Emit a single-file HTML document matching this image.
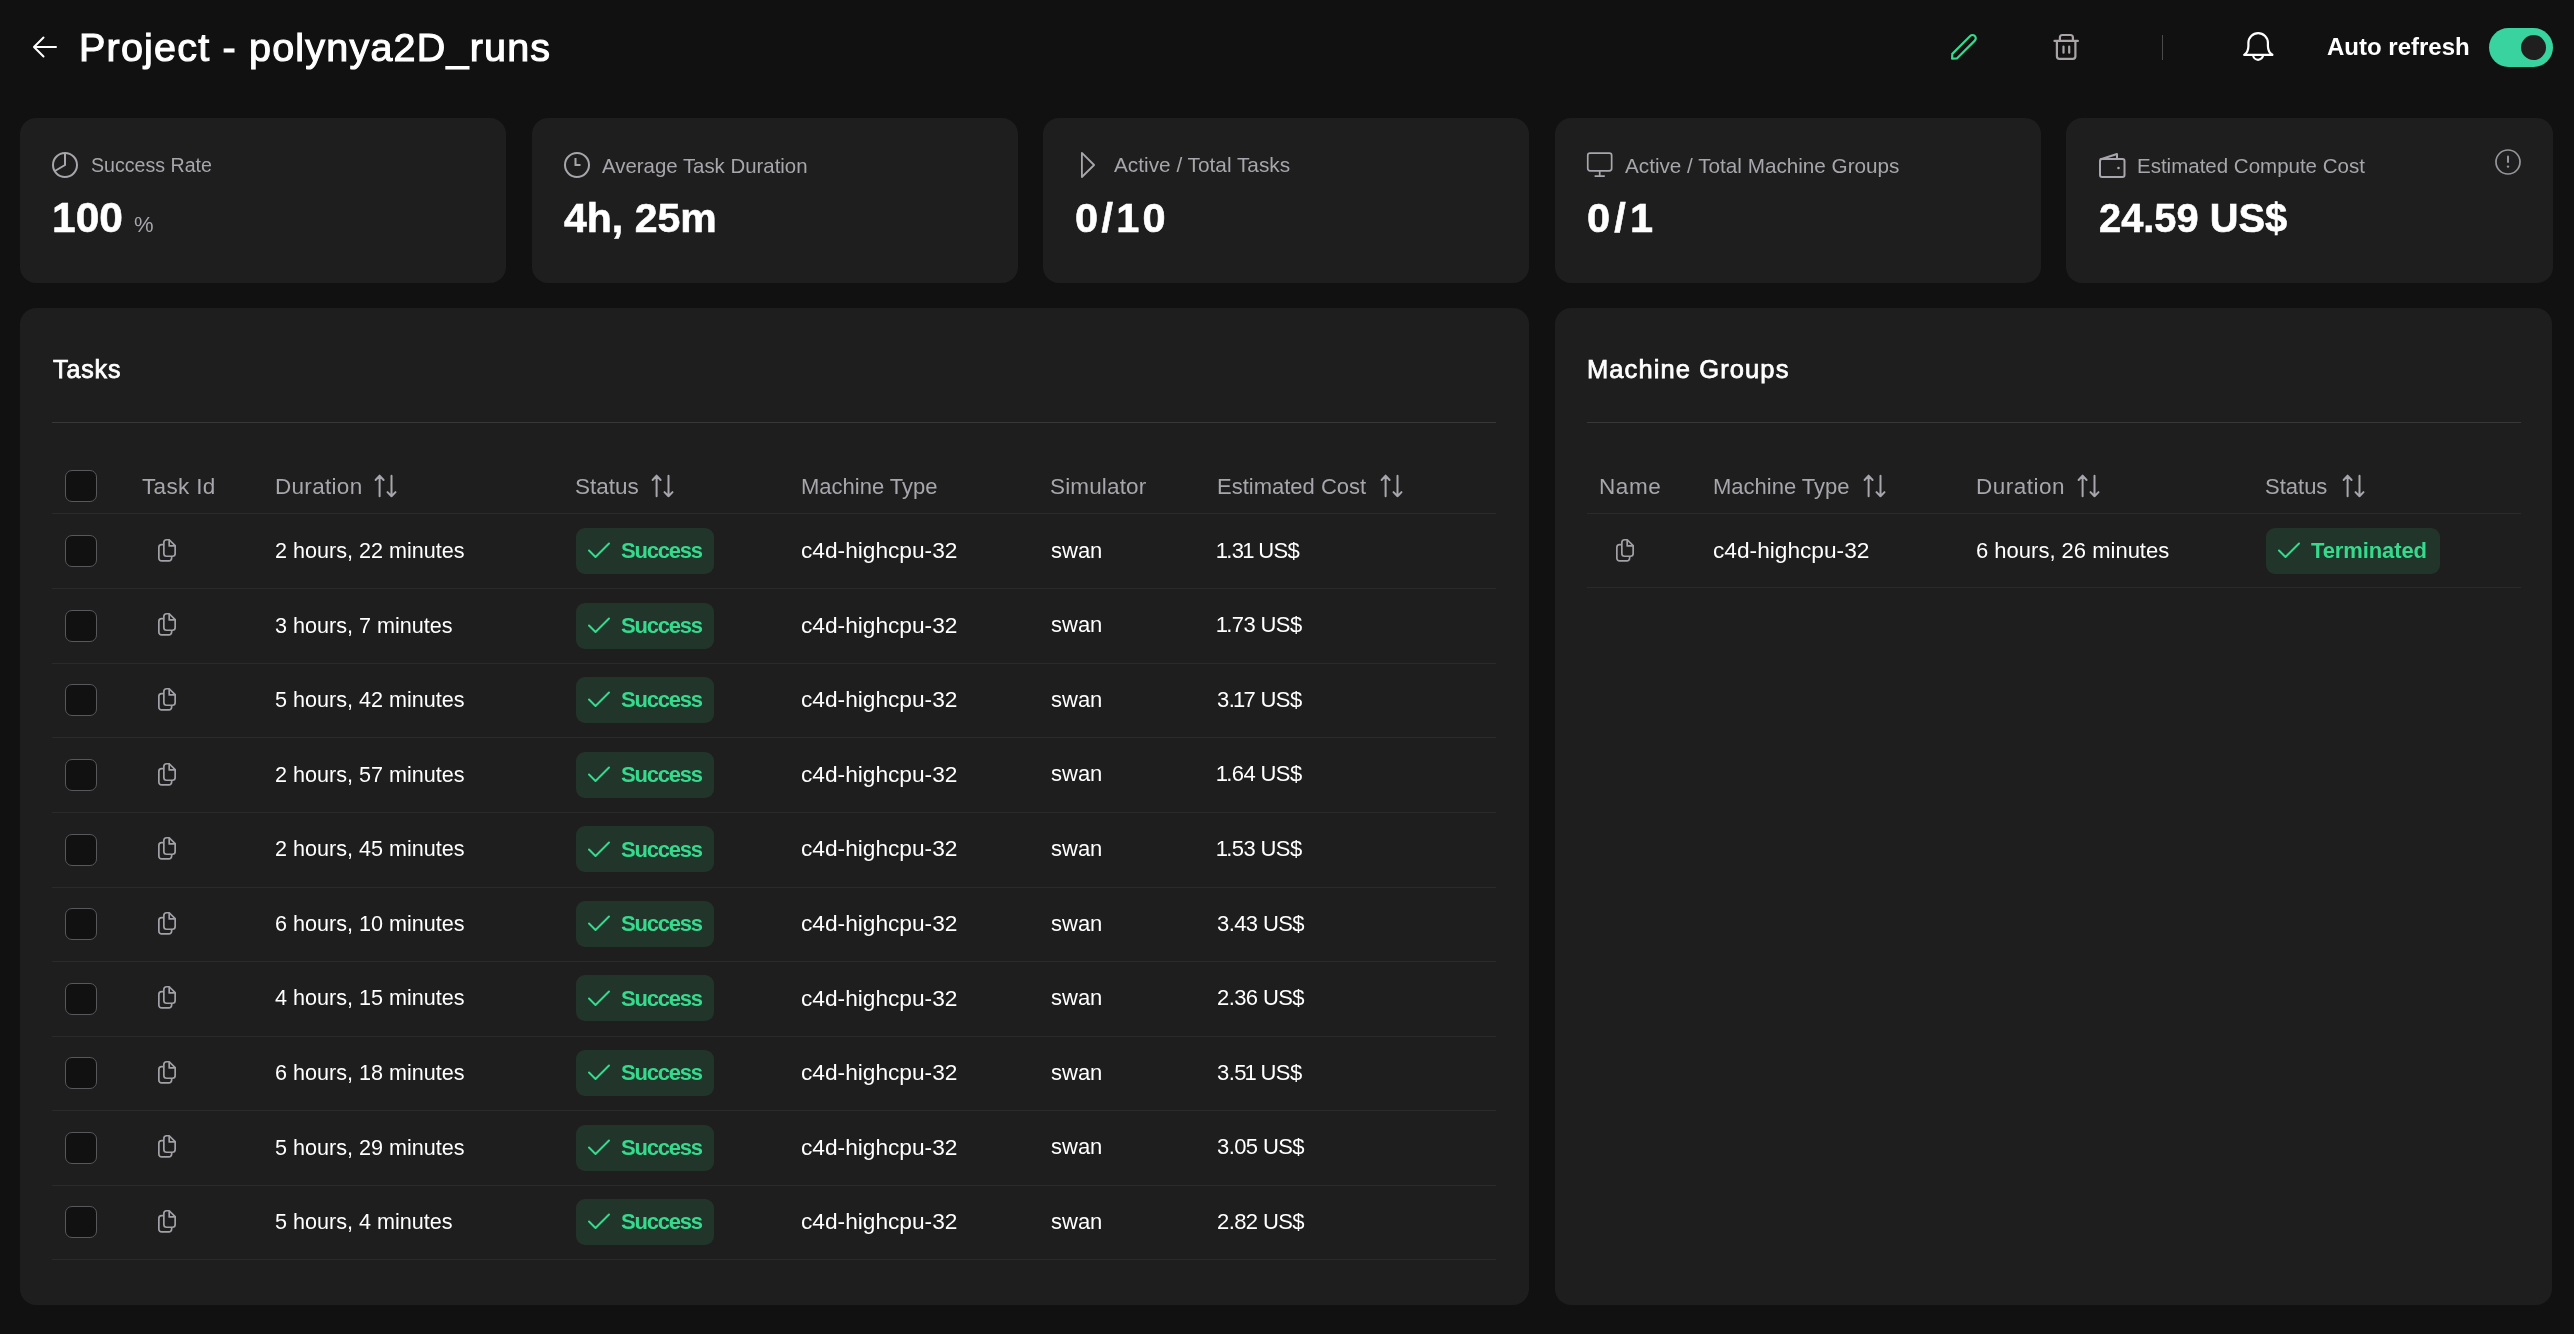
<!DOCTYPE html>
<html><head><meta charset="utf-8"><title>Project - polynya2D_runs</title>
<style>
html,body{margin:0;padding:0;}
body{width:2574px;height:1334px;background:#111111;position:relative;overflow:hidden;font-family:"Liberation Sans", sans-serif;}
.t{position:absolute;white-space:pre;line-height:1;will-change:transform;}
.r{position:absolute;display:block;}
</style></head><body>
<svg class="r" style="left:30px;top:34px" width="30" height="26" viewBox="0 0 30 26" fill="none"><path d="M26 13H4.5M13.5 3.5L4 13l9.5 9.5" stroke="#fff" stroke-width="2" stroke-linecap="round" stroke-linejoin="round"/></svg>
<div class="t" style="left:79.0px;top:27.8px;font-size:39.5px;font-weight:400;color:#fff;-webkit-text-stroke:1.1px #fff;letter-spacing:1.2px;">Project - polynya2D_runs</div>
<svg class="r" style="left:1945px;top:31px" width="34" height="34" viewBox="0 0 34 34" fill="none"><path d="M29.8 9.6 L11.9 27.5 L7.1 27.7 L7.3 22.9 L25.2 5.0 A3.25 3.25 0 0 1 29.8 9.6 Z" stroke="#35da8d" stroke-width="2.2" stroke-linejoin="round"/></svg>
<svg class="r" style="left:2050px;top:31px" width="32" height="32" viewBox="0 0 32 32" fill="none"><path d="M4.5 9.9H27.9M9.9 9.9V6.5a2.5 2.5 0 0 1 2.5-2.5h8a2.5 2.5 0 0 1 2.5 2.5v3.4M6.9 9.9v15.4a2.5 2.5 0 0 0 2.5 2.5h13.5a2.5 2.5 0 0 0 2.5-2.5V9.9M13.5 15.6v6.1M19.2 15.6v6.1" stroke="#aaa3a7" stroke-width="2.2" stroke-linecap="round" stroke-linejoin="round"/></svg>
<div class="r" style="left:2162px;top:35px;width:1px;height:25px;background:#4a4a4a;border-radius:0px;"></div>
<svg class="r" style="left:2240px;top:30px" width="36" height="34" viewBox="0 0 36 34" fill="none"><path d="M4.2 24.8H32.4M4.2 24.8C7.5 22.5 8.4 20.5 8.4 16V12.8A9.75 9.75 0 0 1 27.9 12.8V16C27.9 20.5 28.8 22.5 32.4 24.8M13.1 24.8A5 5 0 0 0 23.1 24.8" stroke="#fff" stroke-width="2.2" stroke-linecap="round" stroke-linejoin="round"/></svg>
<div class="t" style="left:2327.0px;top:34.7px;font-size:24px;font-weight:700;color:#fff;">Auto refresh</div>
<div class="r" style="left:2489px;top:28px;width:64px;height:39px;background:#38d39e;border-radius:20px;"></div>
<div class="r" style="left:2521px;top:35px;width:25px;height:25px;background:#1f1f1f;border-radius:13px;"></div>
<div class="r" style="left:20px;top:118px;width:486.2px;height:164.5px;background:#1e1e1e;border-radius:16px;"></div>
<div class="t" style="left:90.5px;top:156.4px;font-size:19.6px;font-weight:400;color:#a8a6ac;">Success Rate</div>
<div class="r" style="left:531.6px;top:118px;width:486.2px;height:164.5px;background:#1e1e1e;border-radius:16px;"></div>
<div class="t" style="left:602.1px;top:155.7px;font-size:20.4px;font-weight:400;color:#a8a6ac;">Average Task Duration</div>
<div class="r" style="left:1043.2px;top:118px;width:486.2px;height:164.5px;background:#1e1e1e;border-radius:16px;"></div>
<div class="t" style="left:1113.7px;top:155.4px;font-size:20.8px;font-weight:400;color:#a8a6ac;">Active / Total Tasks</div>
<div class="r" style="left:1554.8px;top:118px;width:486.2px;height:164.5px;background:#1e1e1e;border-radius:16px;"></div>
<div class="t" style="left:1625.3px;top:155.5px;font-size:20.7px;font-weight:400;color:#a8a6ac;">Active / Total Machine Groups</div>
<div class="r" style="left:2066.4px;top:118px;width:486.2px;height:164.5px;background:#1e1e1e;border-radius:16px;"></div>
<div class="t" style="left:2136.9px;top:155.6px;font-size:20.5px;font-weight:400;color:#a8a6ac;">Estimated Compute Cost</div>
<svg class="r" style="left:50px;top:150px" width="30" height="30" viewBox="0 0 30 30" fill="none"><circle cx="15" cy="15" r="12" stroke="#a8a6ac" stroke-width="2"/><path d="M15 3v12L4.8 21" stroke="#a8a6ac" stroke-width="2"/></svg>
<svg class="r" style="left:562px;top:150px" width="30" height="30" viewBox="0 0 30 30" fill="none"><circle cx="15" cy="15" r="12" stroke="#a8a6ac" stroke-width="2"/><path d="M13.5 8v7h5" stroke="#a8a6ac" stroke-width="2"/></svg>
<svg class="r" style="left:1078px;top:150px" width="22" height="30" viewBox="0 0 22 30" fill="none"><path d="M3.9 2.9v24.1l12.2-12z" stroke="#a8a6ac" stroke-width="1.8" stroke-linejoin="round"/></svg>
<svg class="r" style="left:1584px;top:150px" width="32" height="30" viewBox="0 0 32 30" fill="none"><rect x="3.75" y="3.05" width="23.9" height="17.8" rx="2.3" stroke="#a8a6ac" stroke-width="1.7"/><path d="M15.7 20.9v5.3M10.6 26.2h10.2" stroke="#a8a6ac" stroke-width="1.7"/></svg>
<svg class="r" style="left:2096px;top:148px" width="32" height="32" viewBox="0 0 32 32" fill="none"><path d="M4 11.5 L21 6 V11" stroke="#a8a6ac" stroke-width="2" stroke-linejoin="round"/><rect x="4" y="11" width="24.5" height="18" rx="2" stroke="#a8a6ac" stroke-width="2"/><circle cx="22.5" cy="20" r="1.3" fill="#a8a6ac"/></svg>
<svg class="r" style="left:2492px;top:146px" width="32" height="32" viewBox="0 0 32 32" fill="none"><circle cx="16" cy="16" r="12" stroke="#97959b" stroke-width="1.7"/><path d="M16 10.5v5.5" stroke="#97959b" stroke-width="2" stroke-linecap="round"/><circle cx="16" cy="20.6" r="1.2" fill="#97959b"/></svg>
<div class="t" style="left:52.0px;top:196.5px;font-size:42.5px;font-weight:700;color:#fff;-webkit-text-stroke:0.6px #fff;">100</div>
<div class="t" style="left:564.0px;top:197.8px;font-size:41px;font-weight:700;color:#fff;-webkit-text-stroke:0.6px #fff;">4h, 25m</div>
<div class="t" style="left:1075.0px;top:197.4px;font-size:41.5px;font-weight:700;color:#fff;letter-spacing:3.3px;-webkit-text-stroke:0.6px #fff;">0/10</div>
<div class="t" style="left:1587.0px;top:197.4px;font-size:41.5px;font-weight:700;color:#fff;letter-spacing:4.2px;-webkit-text-stroke:0.6px #fff;">0/1</div>
<div class="t" style="left:2099.0px;top:198.8px;font-size:39.8px;font-weight:700;color:#fff;-webkit-text-stroke:0.6px #fff;">24.59 US$</div>
<div class="t" style="left:134.0px;top:213.9px;font-size:22px;font-weight:400;color:#a8a6ac;">%</div>
<div class="r" style="left:20px;top:307.5px;width:1508.6px;height:997px;background:#1e1e1e;border-radius:16px;"></div>
<div class="r" style="left:1555.2px;top:307.5px;width:997.2px;height:997px;background:#1e1e1e;border-radius:16px;"></div>
<div class="t" style="left:52.5px;top:357.0px;font-size:25px;font-weight:400;color:#fff;-webkit-text-stroke:0.75px #fff;letter-spacing:0.9px;">Tasks</div>
<div class="t" style="left:1587.0px;top:356.9px;font-size:25.5px;font-weight:400;color:#fff;-webkit-text-stroke:0.75px #fff;letter-spacing:1.1px;">Machine Groups</div>
<div class="r" style="left:52px;top:422px;width:1444px;height:1px;background:#383838;border-radius:0px;"></div>
<div class="r" style="left:1587px;top:422px;width:934px;height:1px;background:#383838;border-radius:0px;"></div>
<div class="r" style="left:65px;top:470px;width:32px;height:32px;background:#111111;border-radius:7px;box-sizing:border-box;border:1.2px solid #58575c;"></div>
<div class="t" style="left:142.0px;top:475.6px;font-size:22.5px;font-weight:400;color:#a8a6ac;letter-spacing:0.35px;">Task Id</div>
<div class="t" style="left:275.0px;top:475.6px;font-size:22.5px;font-weight:400;color:#a8a6ac;letter-spacing:0.3px;">Duration</div>
<svg class="r" style="left:373.1px;top:474px" width="26" height="26" viewBox="0 0 26 26" fill="none"><path d="M6.6 22.3V1.8M2.6 6L6.6 1.8L10.6 6M18.5 1.8V22.3M14.5 18.1L18.5 22.3L22.5 18.1" stroke="#a8a6ac" stroke-width="2" stroke-linecap="round" stroke-linejoin="round"/></svg>
<div class="t" style="left:575.0px;top:475.6px;font-size:22.5px;font-weight:400;color:#a8a6ac;">Status</div>
<svg class="r" style="left:650.2px;top:474px" width="26" height="26" viewBox="0 0 26 26" fill="none"><path d="M6.6 22.3V1.8M2.6 6L6.6 1.8L10.6 6M18.5 1.8V22.3M14.5 18.1L18.5 22.3L22.5 18.1" stroke="#a8a6ac" stroke-width="2" stroke-linecap="round" stroke-linejoin="round"/></svg>
<div class="t" style="left:801.0px;top:476.1px;font-size:22px;font-weight:400;color:#a8a6ac;">Machine Type</div>
<div class="t" style="left:1050.0px;top:475.6px;font-size:22.5px;font-weight:400;color:#a8a6ac;letter-spacing:0.15px;">Simulator</div>
<div class="t" style="left:1217.0px;top:476.1px;font-size:22px;font-weight:400;color:#a8a6ac;">Estimated Cost</div>
<svg class="r" style="left:1379.4px;top:474px" width="26" height="26" viewBox="0 0 26 26" fill="none"><path d="M6.6 22.3V1.8M2.6 6L6.6 1.8L10.6 6M18.5 1.8V22.3M14.5 18.1L18.5 22.3L22.5 18.1" stroke="#a8a6ac" stroke-width="2" stroke-linecap="round" stroke-linejoin="round"/></svg>
<div class="r" style="left:52px;top:513px;width:1444px;height:1px;background:#2a2a2a;border-radius:0px;"></div>
<div class="r" style="left:65px;top:535px;width:32px;height:32px;background:#111111;border-radius:7px;box-sizing:border-box;border:1.2px solid #58575c;"></div>
<svg class="r" style="left:156px;top:538px" width="22" height="26" viewBox="0 0 22 26" fill="none"><path d="M7.85 6.65H5.6a2.75 2.75 0 0 0-2.75 2.75V20.1a2.75 2.75 0 0 0 2.75 2.75H12.9a2.75 2.75 0 0 0 2.75-2.75V18.25" stroke="#a3a1a7" stroke-width="1.7" stroke-linejoin="round"/><path d="M7.85 4.5a2.75 2.75 0 0 1 2.75-2.75H13.2L19.15 7.7V15.5a2.75 2.75 0 0 1-2.75 2.75H10.6a2.75 2.75 0 0 1-2.75-2.75Z" stroke="#a3a1a7" stroke-width="1.7" stroke-linejoin="round"/><path d="M13.2 1.75V7.9H19.15" stroke="#a3a1a7" stroke-width="1.7" stroke-linejoin="round"/></svg>
<div class="t" style="left:275.0px;top:540.0px;font-size:21.6px;font-weight:400;color:#fff;">2 hours, 22 minutes</div>
<div class="r" style="left:576px;top:528px;width:138px;height:46px;background:#22352b;border-radius:9px;"></div>
<svg class="r" style="left:587px;top:541px" width="24" height="18" viewBox="0 0 24 18" fill="none"><path d="M2 9.5l6.5 6.5L22 2.5" stroke="#35da8d" stroke-width="2" stroke-linecap="round" stroke-linejoin="round"/></svg>
<div class="t" style="left:621.0px;top:540.2px;font-size:22px;font-weight:700;color:#35da8d;letter-spacing:-1.2px;">Success</div>
<div class="t" style="left:801.0px;top:539.1px;font-size:22.7px;font-weight:400;color:#fff;">c4d-highcpu-32</div>
<div class="t" style="left:1051.0px;top:539.7px;font-size:22px;font-weight:400;color:#fff;">swan</div>
<div class="t" style="left:1216.5px;top:539.7px;font-size:22px;font-weight:400;color:#fff;letter-spacing:-0.6px;"><span style="margin:0 -1.2px">1</span>.3<span style="margin:0 -1.2px">1</span> US$</div>
<div class="r" style="left:52px;top:588px;width:1444px;height:1px;background:#2a2a2a;border-radius:0px;"></div>
<div class="r" style="left:65px;top:610px;width:32px;height:32px;background:#111111;border-radius:7px;box-sizing:border-box;border:1.2px solid #58575c;"></div>
<svg class="r" style="left:156px;top:612px" width="22" height="26" viewBox="0 0 22 26" fill="none"><path d="M7.85 6.65H5.6a2.75 2.75 0 0 0-2.75 2.75V20.1a2.75 2.75 0 0 0 2.75 2.75H12.9a2.75 2.75 0 0 0 2.75-2.75V18.25" stroke="#a3a1a7" stroke-width="1.7" stroke-linejoin="round"/><path d="M7.85 4.5a2.75 2.75 0 0 1 2.75-2.75H13.2L19.15 7.7V15.5a2.75 2.75 0 0 1-2.75 2.75H10.6a2.75 2.75 0 0 1-2.75-2.75Z" stroke="#a3a1a7" stroke-width="1.7" stroke-linejoin="round"/><path d="M13.2 1.75V7.9H19.15" stroke="#a3a1a7" stroke-width="1.7" stroke-linejoin="round"/></svg>
<div class="t" style="left:275.0px;top:614.6px;font-size:21.6px;font-weight:400;color:#fff;">3 hours, 7 minutes</div>
<div class="r" style="left:576px;top:603px;width:138px;height:46px;background:#22352b;border-radius:9px;"></div>
<svg class="r" style="left:587px;top:616px" width="24" height="18" viewBox="0 0 24 18" fill="none"><path d="M2 9.5l6.5 6.5L22 2.5" stroke="#35da8d" stroke-width="2" stroke-linecap="round" stroke-linejoin="round"/></svg>
<div class="t" style="left:621.0px;top:614.7px;font-size:22px;font-weight:700;color:#35da8d;letter-spacing:-1.2px;">Success</div>
<div class="t" style="left:801.0px;top:613.6px;font-size:22.7px;font-weight:400;color:#fff;">c4d-highcpu-32</div>
<div class="t" style="left:1051.0px;top:614.2px;font-size:22px;font-weight:400;color:#fff;">swan</div>
<div class="t" style="left:1216.5px;top:614.2px;font-size:22px;font-weight:400;color:#fff;letter-spacing:-0.6px;"><span style="margin:0 -1.2px">1</span>.73 US$</div>
<div class="r" style="left:52px;top:663px;width:1444px;height:1px;background:#2a2a2a;border-radius:0px;"></div>
<div class="r" style="left:65px;top:684px;width:32px;height:32px;background:#111111;border-radius:7px;box-sizing:border-box;border:1.2px solid #58575c;"></div>
<svg class="r" style="left:156px;top:687px" width="22" height="26" viewBox="0 0 22 26" fill="none"><path d="M7.85 6.65H5.6a2.75 2.75 0 0 0-2.75 2.75V20.1a2.75 2.75 0 0 0 2.75 2.75H12.9a2.75 2.75 0 0 0 2.75-2.75V18.25" stroke="#a3a1a7" stroke-width="1.7" stroke-linejoin="round"/><path d="M7.85 4.5a2.75 2.75 0 0 1 2.75-2.75H13.2L19.15 7.7V15.5a2.75 2.75 0 0 1-2.75 2.75H10.6a2.75 2.75 0 0 1-2.75-2.75Z" stroke="#a3a1a7" stroke-width="1.7" stroke-linejoin="round"/><path d="M13.2 1.75V7.9H19.15" stroke="#a3a1a7" stroke-width="1.7" stroke-linejoin="round"/></svg>
<div class="t" style="left:275.0px;top:689.2px;font-size:21.6px;font-weight:400;color:#fff;">5 hours, 42 minutes</div>
<div class="r" style="left:576px;top:677px;width:138px;height:46px;background:#22352b;border-radius:9px;"></div>
<svg class="r" style="left:587px;top:690px" width="24" height="18" viewBox="0 0 24 18" fill="none"><path d="M2 9.5l6.5 6.5L22 2.5" stroke="#35da8d" stroke-width="2" stroke-linecap="round" stroke-linejoin="round"/></svg>
<div class="t" style="left:621.0px;top:689.3px;font-size:22px;font-weight:700;color:#35da8d;letter-spacing:-1.2px;">Success</div>
<div class="t" style="left:801.0px;top:688.2px;font-size:22.7px;font-weight:400;color:#fff;">c4d-highcpu-32</div>
<div class="t" style="left:1051.0px;top:688.8px;font-size:22px;font-weight:400;color:#fff;">swan</div>
<div class="t" style="left:1216.5px;top:688.8px;font-size:22px;font-weight:400;color:#fff;letter-spacing:-0.6px;">3.<span style="margin:0 -1.2px">1</span>7 US$</div>
<div class="r" style="left:52px;top:737px;width:1444px;height:1px;background:#2a2a2a;border-radius:0px;"></div>
<div class="r" style="left:65px;top:759px;width:32px;height:32px;background:#111111;border-radius:7px;box-sizing:border-box;border:1.2px solid #58575c;"></div>
<svg class="r" style="left:156px;top:762px" width="22" height="26" viewBox="0 0 22 26" fill="none"><path d="M7.85 6.65H5.6a2.75 2.75 0 0 0-2.75 2.75V20.1a2.75 2.75 0 0 0 2.75 2.75H12.9a2.75 2.75 0 0 0 2.75-2.75V18.25" stroke="#a3a1a7" stroke-width="1.7" stroke-linejoin="round"/><path d="M7.85 4.5a2.75 2.75 0 0 1 2.75-2.75H13.2L19.15 7.7V15.5a2.75 2.75 0 0 1-2.75 2.75H10.6a2.75 2.75 0 0 1-2.75-2.75Z" stroke="#a3a1a7" stroke-width="1.7" stroke-linejoin="round"/><path d="M13.2 1.75V7.9H19.15" stroke="#a3a1a7" stroke-width="1.7" stroke-linejoin="round"/></svg>
<div class="t" style="left:275.0px;top:763.7px;font-size:21.6px;font-weight:400;color:#fff;">2 hours, 57 minutes</div>
<div class="r" style="left:576px;top:752px;width:138px;height:46px;background:#22352b;border-radius:9px;"></div>
<svg class="r" style="left:587px;top:765px" width="24" height="18" viewBox="0 0 24 18" fill="none"><path d="M2 9.5l6.5 6.5L22 2.5" stroke="#35da8d" stroke-width="2" stroke-linecap="round" stroke-linejoin="round"/></svg>
<div class="t" style="left:621.0px;top:763.9px;font-size:22px;font-weight:700;color:#35da8d;letter-spacing:-1.2px;">Success</div>
<div class="t" style="left:801.0px;top:762.8px;font-size:22.7px;font-weight:400;color:#fff;">c4d-highcpu-32</div>
<div class="t" style="left:1051.0px;top:763.4px;font-size:22px;font-weight:400;color:#fff;">swan</div>
<div class="t" style="left:1216.5px;top:763.4px;font-size:22px;font-weight:400;color:#fff;letter-spacing:-0.6px;"><span style="margin:0 -1.2px">1</span>.64 US$</div>
<div class="r" style="left:52px;top:812px;width:1444px;height:1px;background:#2a2a2a;border-radius:0px;"></div>
<div class="r" style="left:65px;top:834px;width:32px;height:32px;background:#111111;border-radius:7px;box-sizing:border-box;border:1.2px solid #58575c;"></div>
<svg class="r" style="left:156px;top:836px" width="22" height="26" viewBox="0 0 22 26" fill="none"><path d="M7.85 6.65H5.6a2.75 2.75 0 0 0-2.75 2.75V20.1a2.75 2.75 0 0 0 2.75 2.75H12.9a2.75 2.75 0 0 0 2.75-2.75V18.25" stroke="#a3a1a7" stroke-width="1.7" stroke-linejoin="round"/><path d="M7.85 4.5a2.75 2.75 0 0 1 2.75-2.75H13.2L19.15 7.7V15.5a2.75 2.75 0 0 1-2.75 2.75H10.6a2.75 2.75 0 0 1-2.75-2.75Z" stroke="#a3a1a7" stroke-width="1.7" stroke-linejoin="round"/><path d="M13.2 1.75V7.9H19.15" stroke="#a3a1a7" stroke-width="1.7" stroke-linejoin="round"/></svg>
<div class="t" style="left:275.0px;top:838.3px;font-size:21.6px;font-weight:400;color:#fff;">2 hours, 45 minutes</div>
<div class="r" style="left:576px;top:826px;width:138px;height:46px;background:#22352b;border-radius:9px;"></div>
<svg class="r" style="left:587px;top:840px" width="24" height="18" viewBox="0 0 24 18" fill="none"><path d="M2 9.5l6.5 6.5L22 2.5" stroke="#35da8d" stroke-width="2" stroke-linecap="round" stroke-linejoin="round"/></svg>
<div class="t" style="left:621.0px;top:838.5px;font-size:22px;font-weight:700;color:#35da8d;letter-spacing:-1.2px;">Success</div>
<div class="t" style="left:801.0px;top:837.4px;font-size:22.7px;font-weight:400;color:#fff;">c4d-highcpu-32</div>
<div class="t" style="left:1051.0px;top:838.0px;font-size:22px;font-weight:400;color:#fff;">swan</div>
<div class="t" style="left:1216.5px;top:838.0px;font-size:22px;font-weight:400;color:#fff;letter-spacing:-0.6px;"><span style="margin:0 -1.2px">1</span>.53 US$</div>
<div class="r" style="left:52px;top:887px;width:1444px;height:1px;background:#2a2a2a;border-radius:0px;"></div>
<div class="r" style="left:65px;top:908px;width:32px;height:32px;background:#111111;border-radius:7px;box-sizing:border-box;border:1.2px solid #58575c;"></div>
<svg class="r" style="left:156px;top:911px" width="22" height="26" viewBox="0 0 22 26" fill="none"><path d="M7.85 6.65H5.6a2.75 2.75 0 0 0-2.75 2.75V20.1a2.75 2.75 0 0 0 2.75 2.75H12.9a2.75 2.75 0 0 0 2.75-2.75V18.25" stroke="#a3a1a7" stroke-width="1.7" stroke-linejoin="round"/><path d="M7.85 4.5a2.75 2.75 0 0 1 2.75-2.75H13.2L19.15 7.7V15.5a2.75 2.75 0 0 1-2.75 2.75H10.6a2.75 2.75 0 0 1-2.75-2.75Z" stroke="#a3a1a7" stroke-width="1.7" stroke-linejoin="round"/><path d="M13.2 1.75V7.9H19.15" stroke="#a3a1a7" stroke-width="1.7" stroke-linejoin="round"/></svg>
<div class="t" style="left:275.0px;top:912.9px;font-size:21.6px;font-weight:400;color:#fff;">6 hours, 10 minutes</div>
<div class="r" style="left:576px;top:901px;width:138px;height:46px;background:#22352b;border-radius:9px;"></div>
<svg class="r" style="left:587px;top:914px" width="24" height="18" viewBox="0 0 24 18" fill="none"><path d="M2 9.5l6.5 6.5L22 2.5" stroke="#35da8d" stroke-width="2" stroke-linecap="round" stroke-linejoin="round"/></svg>
<div class="t" style="left:621.0px;top:913.0px;font-size:22px;font-weight:700;color:#35da8d;letter-spacing:-1.2px;">Success</div>
<div class="t" style="left:801.0px;top:911.9px;font-size:22.7px;font-weight:400;color:#fff;">c4d-highcpu-32</div>
<div class="t" style="left:1051.0px;top:912.5px;font-size:22px;font-weight:400;color:#fff;">swan</div>
<div class="t" style="left:1216.5px;top:912.5px;font-size:22px;font-weight:400;color:#fff;letter-spacing:-0.6px;">3.43 US$</div>
<div class="r" style="left:52px;top:961px;width:1444px;height:1px;background:#2a2a2a;border-radius:0px;"></div>
<div class="r" style="left:65px;top:983px;width:32px;height:32px;background:#111111;border-radius:7px;box-sizing:border-box;border:1.2px solid #58575c;"></div>
<svg class="r" style="left:156px;top:985px" width="22" height="26" viewBox="0 0 22 26" fill="none"><path d="M7.85 6.65H5.6a2.75 2.75 0 0 0-2.75 2.75V20.1a2.75 2.75 0 0 0 2.75 2.75H12.9a2.75 2.75 0 0 0 2.75-2.75V18.25" stroke="#a3a1a7" stroke-width="1.7" stroke-linejoin="round"/><path d="M7.85 4.5a2.75 2.75 0 0 1 2.75-2.75H13.2L19.15 7.7V15.5a2.75 2.75 0 0 1-2.75 2.75H10.6a2.75 2.75 0 0 1-2.75-2.75Z" stroke="#a3a1a7" stroke-width="1.7" stroke-linejoin="round"/><path d="M13.2 1.75V7.9H19.15" stroke="#a3a1a7" stroke-width="1.7" stroke-linejoin="round"/></svg>
<div class="t" style="left:275.0px;top:987.4px;font-size:21.6px;font-weight:400;color:#fff;">4 hours, 15 minutes</div>
<div class="r" style="left:576px;top:975px;width:138px;height:46px;background:#22352b;border-radius:9px;"></div>
<svg class="r" style="left:587px;top:989px" width="24" height="18" viewBox="0 0 24 18" fill="none"><path d="M2 9.5l6.5 6.5L22 2.5" stroke="#35da8d" stroke-width="2" stroke-linecap="round" stroke-linejoin="round"/></svg>
<div class="t" style="left:621.0px;top:987.6px;font-size:22px;font-weight:700;color:#35da8d;letter-spacing:-1.2px;">Success</div>
<div class="t" style="left:801.0px;top:986.5px;font-size:22.7px;font-weight:400;color:#fff;">c4d-highcpu-32</div>
<div class="t" style="left:1051.0px;top:987.1px;font-size:22px;font-weight:400;color:#fff;">swan</div>
<div class="t" style="left:1216.5px;top:987.1px;font-size:22px;font-weight:400;color:#fff;letter-spacing:-0.6px;">2.36 US$</div>
<div class="r" style="left:52px;top:1036px;width:1444px;height:1px;background:#2a2a2a;border-radius:0px;"></div>
<div class="r" style="left:65px;top:1057px;width:32px;height:32px;background:#111111;border-radius:7px;box-sizing:border-box;border:1.2px solid #58575c;"></div>
<svg class="r" style="left:156px;top:1060px" width="22" height="26" viewBox="0 0 22 26" fill="none"><path d="M7.85 6.65H5.6a2.75 2.75 0 0 0-2.75 2.75V20.1a2.75 2.75 0 0 0 2.75 2.75H12.9a2.75 2.75 0 0 0 2.75-2.75V18.25" stroke="#a3a1a7" stroke-width="1.7" stroke-linejoin="round"/><path d="M7.85 4.5a2.75 2.75 0 0 1 2.75-2.75H13.2L19.15 7.7V15.5a2.75 2.75 0 0 1-2.75 2.75H10.6a2.75 2.75 0 0 1-2.75-2.75Z" stroke="#a3a1a7" stroke-width="1.7" stroke-linejoin="round"/><path d="M13.2 1.75V7.9H19.15" stroke="#a3a1a7" stroke-width="1.7" stroke-linejoin="round"/></svg>
<div class="t" style="left:275.0px;top:1062.0px;font-size:21.6px;font-weight:400;color:#fff;">6 hours, 18 minutes</div>
<div class="r" style="left:576px;top:1050px;width:138px;height:46px;background:#22352b;border-radius:9px;"></div>
<svg class="r" style="left:587px;top:1063px" width="24" height="18" viewBox="0 0 24 18" fill="none"><path d="M2 9.5l6.5 6.5L22 2.5" stroke="#35da8d" stroke-width="2" stroke-linecap="round" stroke-linejoin="round"/></svg>
<div class="t" style="left:621.0px;top:1062.2px;font-size:22px;font-weight:700;color:#35da8d;letter-spacing:-1.2px;">Success</div>
<div class="t" style="left:801.0px;top:1061.1px;font-size:22.7px;font-weight:400;color:#fff;">c4d-highcpu-32</div>
<div class="t" style="left:1051.0px;top:1061.7px;font-size:22px;font-weight:400;color:#fff;">swan</div>
<div class="t" style="left:1216.5px;top:1061.7px;font-size:22px;font-weight:400;color:#fff;letter-spacing:-0.6px;">3.5<span style="margin:0 -1.2px">1</span> US$</div>
<div class="r" style="left:52px;top:1110px;width:1444px;height:1px;background:#2a2a2a;border-radius:0px;"></div>
<div class="r" style="left:65px;top:1132px;width:32px;height:32px;background:#111111;border-radius:7px;box-sizing:border-box;border:1.2px solid #58575c;"></div>
<svg class="r" style="left:156px;top:1134px" width="22" height="26" viewBox="0 0 22 26" fill="none"><path d="M7.85 6.65H5.6a2.75 2.75 0 0 0-2.75 2.75V20.1a2.75 2.75 0 0 0 2.75 2.75H12.9a2.75 2.75 0 0 0 2.75-2.75V18.25" stroke="#a3a1a7" stroke-width="1.7" stroke-linejoin="round"/><path d="M7.85 4.5a2.75 2.75 0 0 1 2.75-2.75H13.2L19.15 7.7V15.5a2.75 2.75 0 0 1-2.75 2.75H10.6a2.75 2.75 0 0 1-2.75-2.75Z" stroke="#a3a1a7" stroke-width="1.7" stroke-linejoin="round"/><path d="M13.2 1.75V7.9H19.15" stroke="#a3a1a7" stroke-width="1.7" stroke-linejoin="round"/></svg>
<div class="t" style="left:275.0px;top:1136.6px;font-size:21.6px;font-weight:400;color:#fff;">5 hours, 29 minutes</div>
<div class="r" style="left:576px;top:1125px;width:138px;height:46px;background:#22352b;border-radius:9px;"></div>
<svg class="r" style="left:587px;top:1138px" width="24" height="18" viewBox="0 0 24 18" fill="none"><path d="M2 9.5l6.5 6.5L22 2.5" stroke="#35da8d" stroke-width="2" stroke-linecap="round" stroke-linejoin="round"/></svg>
<div class="t" style="left:621.0px;top:1136.7px;font-size:22px;font-weight:700;color:#35da8d;letter-spacing:-1.2px;">Success</div>
<div class="t" style="left:801.0px;top:1135.6px;font-size:22.7px;font-weight:400;color:#fff;">c4d-highcpu-32</div>
<div class="t" style="left:1051.0px;top:1136.2px;font-size:22px;font-weight:400;color:#fff;">swan</div>
<div class="t" style="left:1216.5px;top:1136.2px;font-size:22px;font-weight:400;color:#fff;letter-spacing:-0.6px;">3.05 US$</div>
<div class="r" style="left:52px;top:1185px;width:1444px;height:1px;background:#2a2a2a;border-radius:0px;"></div>
<div class="r" style="left:65px;top:1206px;width:32px;height:32px;background:#111111;border-radius:7px;box-sizing:border-box;border:1.2px solid #58575c;"></div>
<svg class="r" style="left:156px;top:1209px" width="22" height="26" viewBox="0 0 22 26" fill="none"><path d="M7.85 6.65H5.6a2.75 2.75 0 0 0-2.75 2.75V20.1a2.75 2.75 0 0 0 2.75 2.75H12.9a2.75 2.75 0 0 0 2.75-2.75V18.25" stroke="#a3a1a7" stroke-width="1.7" stroke-linejoin="round"/><path d="M7.85 4.5a2.75 2.75 0 0 1 2.75-2.75H13.2L19.15 7.7V15.5a2.75 2.75 0 0 1-2.75 2.75H10.6a2.75 2.75 0 0 1-2.75-2.75Z" stroke="#a3a1a7" stroke-width="1.7" stroke-linejoin="round"/><path d="M13.2 1.75V7.9H19.15" stroke="#a3a1a7" stroke-width="1.7" stroke-linejoin="round"/></svg>
<div class="t" style="left:275.0px;top:1211.1px;font-size:21.6px;font-weight:400;color:#fff;">5 hours, 4 minutes</div>
<div class="r" style="left:576px;top:1199px;width:138px;height:46px;background:#22352b;border-radius:9px;"></div>
<svg class="r" style="left:587px;top:1212px" width="24" height="18" viewBox="0 0 24 18" fill="none"><path d="M2 9.5l6.5 6.5L22 2.5" stroke="#35da8d" stroke-width="2" stroke-linecap="round" stroke-linejoin="round"/></svg>
<div class="t" style="left:621.0px;top:1211.3px;font-size:22px;font-weight:700;color:#35da8d;letter-spacing:-1.2px;">Success</div>
<div class="t" style="left:801.0px;top:1210.2px;font-size:22.7px;font-weight:400;color:#fff;">c4d-highcpu-32</div>
<div class="t" style="left:1051.0px;top:1210.8px;font-size:22px;font-weight:400;color:#fff;">swan</div>
<div class="t" style="left:1216.5px;top:1210.8px;font-size:22px;font-weight:400;color:#fff;letter-spacing:-0.6px;">2.82 US$</div>
<div class="r" style="left:52px;top:1259px;width:1444px;height:1px;background:#2a2a2a;border-radius:0px;"></div>
<div class="t" style="left:1599.0px;top:475.6px;font-size:22.5px;font-weight:400;color:#a8a6ac;letter-spacing:0.6px;">Name</div>
<div class="t" style="left:1713.0px;top:476.1px;font-size:22px;font-weight:400;color:#a8a6ac;">Machine Type</div>
<svg class="r" style="left:1861.8px;top:474px" width="26" height="26" viewBox="0 0 26 26" fill="none"><path d="M6.6 22.3V1.8M2.6 6L6.6 1.8L10.6 6M18.5 1.8V22.3M14.5 18.1L18.5 22.3L22.5 18.1" stroke="#a8a6ac" stroke-width="2" stroke-linecap="round" stroke-linejoin="round"/></svg>
<div class="t" style="left:1976.0px;top:475.6px;font-size:22.5px;font-weight:400;color:#a8a6ac;letter-spacing:0.5px;">Duration</div>
<svg class="r" style="left:2075.6px;top:474px" width="26" height="26" viewBox="0 0 26 26" fill="none"><path d="M6.6 22.3V1.8M2.6 6L6.6 1.8L10.6 6M18.5 1.8V22.3M14.5 18.1L18.5 22.3L22.5 18.1" stroke="#a8a6ac" stroke-width="2" stroke-linecap="round" stroke-linejoin="round"/></svg>
<div class="t" style="left:2265.0px;top:476.1px;font-size:22px;font-weight:400;color:#a8a6ac;">Status</div>
<svg class="r" style="left:2341.1px;top:474px" width="26" height="26" viewBox="0 0 26 26" fill="none"><path d="M6.6 22.3V1.8M2.6 6L6.6 1.8L10.6 6M18.5 1.8V22.3M14.5 18.1L18.5 22.3L22.5 18.1" stroke="#a8a6ac" stroke-width="2" stroke-linecap="round" stroke-linejoin="round"/></svg>
<div class="r" style="left:1587px;top:513px;width:934px;height:1px;background:#2a2a2a;border-radius:0px;"></div>
<svg class="r" style="left:1614px;top:538px" width="22" height="26" viewBox="0 0 22 26" fill="none"><path d="M7.85 6.65H5.6a2.75 2.75 0 0 0-2.75 2.75V20.1a2.75 2.75 0 0 0 2.75 2.75H12.9a2.75 2.75 0 0 0 2.75-2.75V18.25" stroke="#a3a1a7" stroke-width="1.7" stroke-linejoin="round"/><path d="M7.85 4.5a2.75 2.75 0 0 1 2.75-2.75H13.2L19.15 7.7V15.5a2.75 2.75 0 0 1-2.75 2.75H10.6a2.75 2.75 0 0 1-2.75-2.75Z" stroke="#a3a1a7" stroke-width="1.7" stroke-linejoin="round"/><path d="M13.2 1.75V7.9H19.15" stroke="#a3a1a7" stroke-width="1.7" stroke-linejoin="round"/></svg>
<div class="t" style="left:1713.0px;top:539.1px;font-size:22.7px;font-weight:400;color:#fff;">c4d-highcpu-32</div>
<div class="t" style="left:1976.0px;top:539.7px;font-size:22px;font-weight:400;color:#fff;">6 hours, 26 minutes</div>
<div class="r" style="left:2266px;top:528px;width:174px;height:46px;background:#22352b;border-radius:9px;"></div>
<svg class="r" style="left:2277px;top:541px" width="24" height="18" viewBox="0 0 24 18" fill="none"><path d="M2 9.5l6.5 6.5L22 2.5" stroke="#35da8d" stroke-width="2" stroke-linecap="round" stroke-linejoin="round"/></svg>
<div class="t" style="left:2311.0px;top:540.2px;font-size:22px;font-weight:700;color:#35da8d;letter-spacing:-0.1px;">Terminated</div>
<div class="r" style="left:1587px;top:587px;width:934px;height:1px;background:#2a2a2a;border-radius:0px;"></div>
</body></html>
